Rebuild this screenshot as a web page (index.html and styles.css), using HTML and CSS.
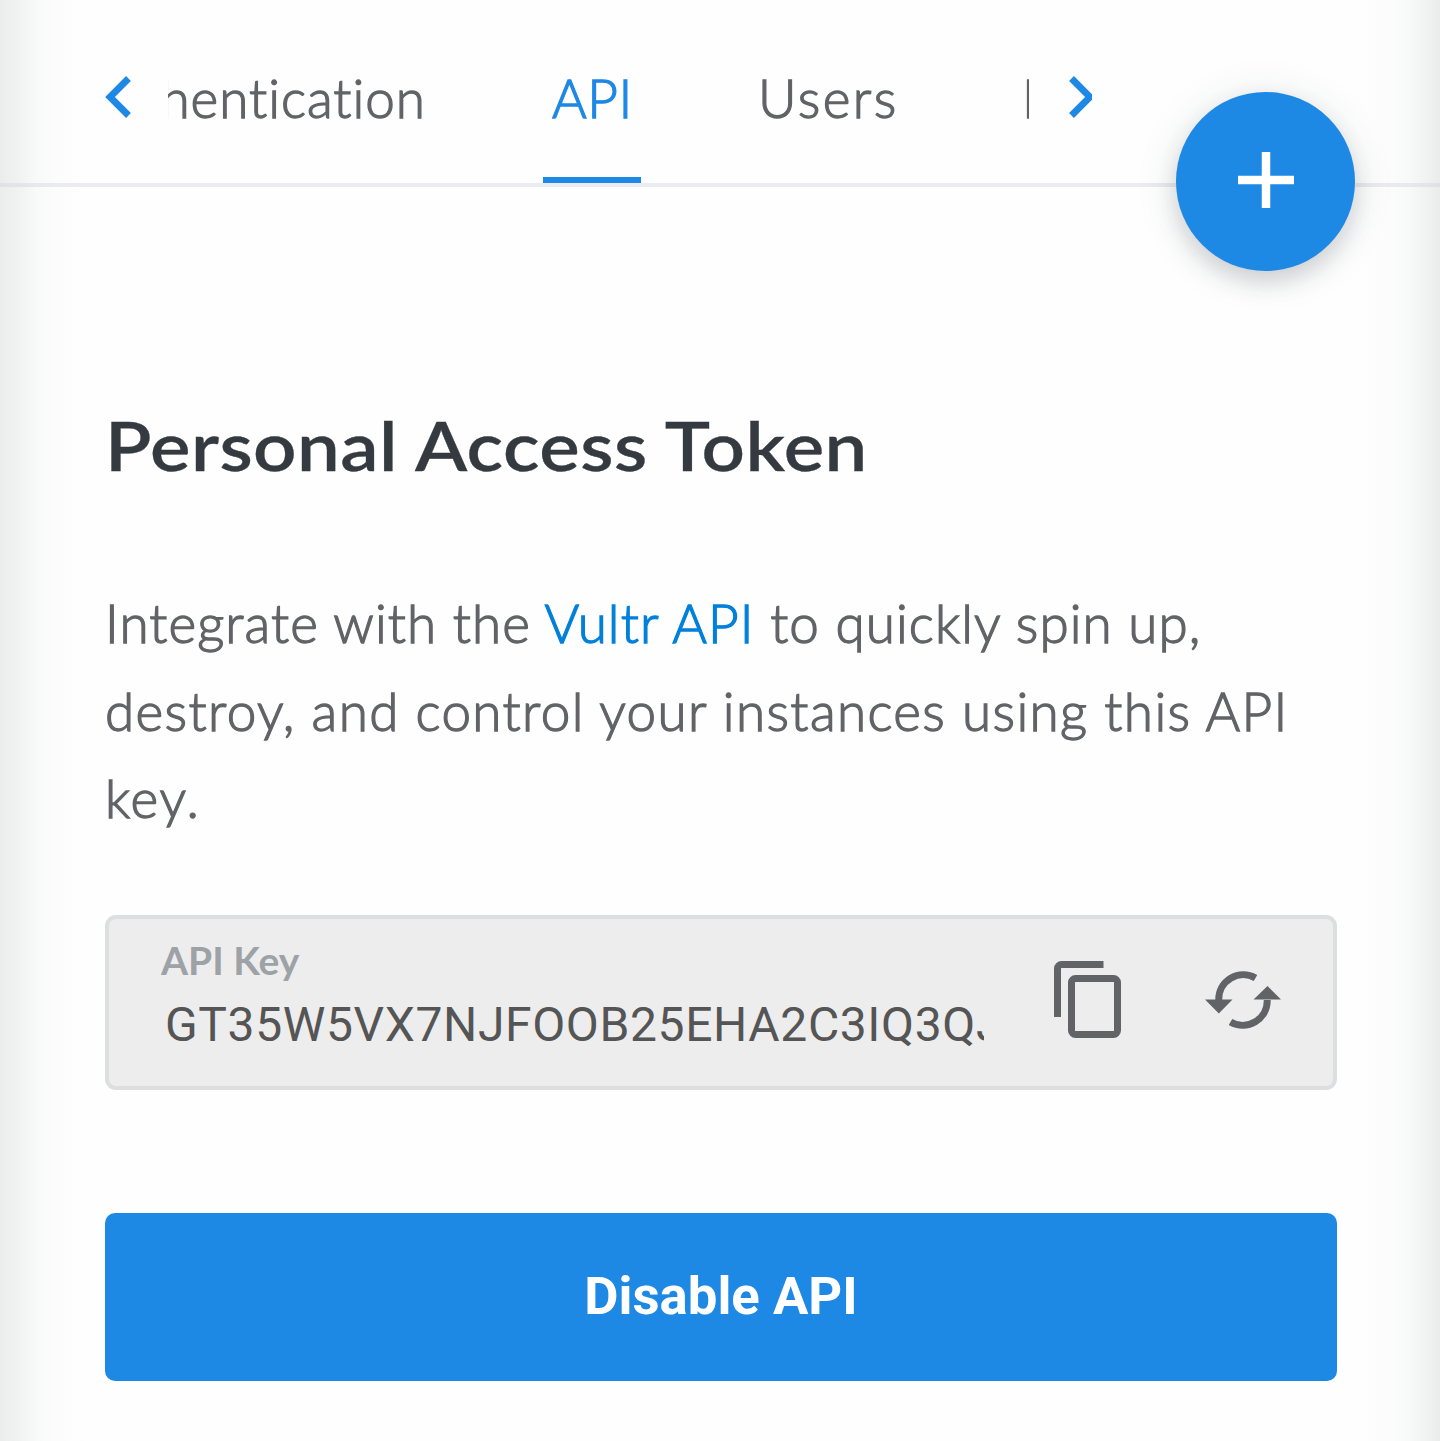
FILE: index.html
```html
<!DOCTYPE html>
<html lang="en">
<head>
<meta charset="utf-8">
<title>API</title>
<link rel="stylesheet" href="styles.css">
</head>
<body>
<header class="topbar">
  <button class="arrow" aria-label="Previous"><svg class="chev" width="28" height="44" viewBox="0 0 28 44"><path d="M23.5 3.5 5 22l18.500 18.500" /></svg></button>
  <nav class="tabs">
    <a class="tab tab-auth"><span>Authentication</span></a>
    <a class="tab tab-api active"><span>API</span></a>
    <a class="tab tab-users"><span>Users</span></a>
    <a class="tab tab-next"><span>Notifications</span></a>
  </nav>
  <button class="arrow next" aria-label="Next"><svg class="chev" width="24" height="44" viewBox="0 0 24 44"><path d="M3.500 3.500 22 22 3.500 40.500" /></svg></button>
  <button class="fab" aria-label="Add"><svg width="56" height="56" viewBox="0 0 56 56"><path d="M28 0v56M0 28h56" /></svg></button>
</header>
<main class="content">
  <h1><span>Personal Access Token</span></h1>
  <p class="intro">
    <span class="line l1">Integrate with the <a>Vultr API</a> to quickly spin up,</span>
    <span class="line l2">destroy, and control your instances using this API</span>
    <span class="line l3">key.</span>
  </p>
  <section class="field">
    <div class="field-text">
      <label>API Key</label>
      <div class="key">GT35W5VX7NJFOOB25EHA2C3IQ3QJ</div>
    </div>
    <svg class="copy" width="67" height="77" viewBox="0 0 67 77"><path d="M3.500 56V7.500a4 4 0 0 1 4-4H49.500"/><rect x="17.500" y="17.500" width="46" height="56" rx="4"/></svg>
    <svg class="refresh" width="76" height="58" viewBox="0 0 76 58"><path class="arc" d="M50.500 7A24.500 24.500 0 0 0 13.800 29M25.500 51A24.500 24.500 0 0 0 62.200 29"/><path class="head" d="M0 28.500h27.500L13.800 42.500zM48.500 28.500H76L62.500 15z"/></svg>
  </section>
  <button class="disable">Disable API</button>
</main>
</body>
</html>
```
FILE: styles.css
```css
* { box-sizing: border-box; }
body {
  margin: 0;
  height: 1441px;
  overflow: hidden;
  color: #616366;
  font-family: Lato, sans-serif;
  font-weight: 300;
  font-variant-ligatures: none;
  background:
    linear-gradient(to right, #ebeded 0, #f1f3f2 20px, #f8f9f9 36px, #fcfcfc 54px, transparent 86px),
    linear-gradient(to left, #ebebeb 0, #f1f2f2 14px, #f8f9f9 32px, #fcfcfc 50px, transparent 84px),
    #fefefe;
}
button { border: 0; padding: 0; background: none; font: inherit; }
svg { display: block; }
.topbar {
  position: relative;
  display: flex;
  height: 187px;
  padding-left: 105px;
  border-bottom: 4px solid rgba(200, 208, 217, .38);
}
.arrow { width: 63px; height: 183px; padding-top: 75px; display: flex; }
.chev path { fill: none; stroke: #1e88e5; stroke-width: 6.800; }
.arrow.next { margin-left: 39px; }
.tabs { display: flex; width: 861px; overflow: hidden; font-size: 53px; line-height: 64px; white-space: nowrap; -webkit-text-stroke: 1.300px; }
.tab { flex: none; height: 183px; padding-top: 66px; }
.tab-auth { width: 375px; padding-right: 117px; display: flex; justify-content: flex-end; letter-spacing: 1px; }
.tab-api { width: 98px; padding-left: 9px; letter-spacing: .5px; }
.tab-users { margin-left: 108px; padding-left: 9px; width: 258px; letter-spacing: 2.500px; }
.tab-next { width: 200px; padding-left: 15px; }
.active { color: #1e88e5; border-bottom: 6.500px solid #1e88e5; }
.fab {
  position: absolute;
  left: 1176px;
  top: 92px;
  width: 179px;
  height: 179px;
  border-radius: 50%;
  background: #1e88e5;
  display: flex;
  justify-content: center;
  padding: 59.500px 0 0 0;
  box-shadow: 0 11px 22px rgba(50, 55, 65, .18), 0 4px 44px rgba(50, 60, 60, .11);
}
.fab path { stroke: #fff; stroke-width: 8.500; fill: none; }
.content { padding: 0 103px 0 105px; }
h1 { margin: 216px 0 0; font-size: 68px; line-height: 84px; font-weight: 600; color: #343a40; white-space: nowrap; }
h1 span { display: inline-block; transform: scaleX(1.12); transform-origin: 0 0; letter-spacing: .430px; -webkit-text-stroke: .300px; }
.intro { margin: 92px 0 0; font-size: 53px; line-height: 87.500px; white-space: nowrap; -webkit-text-stroke: 1.300px; }
.line { display: block; }
.l1 { letter-spacing: 1.080px; }
.l2 { letter-spacing: 1.380px; }
.l3 { letter-spacing: 2px; }
.intro a { color: #0080db; }
.field {
  display: flex;
  align-items: flex-start;
  height: 175px;
  margin-top: 73px;
  border: 4px solid #dcdee0;
  border-radius: 11px;
  background: #ededed;
  padding-left: 52px;
}
.field-text { width: 823px; overflow: hidden; height: 160px; padding-top: 18px; }
label { display: block; font-size: 39px; line-height: 46px; font-weight: 700; color: #9da2a6; }
.key { margin: 12px 0 0 4px; font: 400 48px/60px Roboto, sans-serif; letter-spacing: .620px; color: #555; white-space: nowrap; overflow: hidden; }
.field path, .field rect { fill: none; stroke: #616366; stroke-width: 7; }
.field .head { fill: #616366; stroke: none; }
.copy { margin: 42px 0 0 70px; }
.refresh { margin: 52px 0 0 84px; }
.disable {
  width: 100%;
  height: 168px;
  margin-top: 123px;
  padding-bottom: 2px;
  border-radius: 10px;
  background: #1e88e5;
  color: #fff;
  font: 700 52.700px/62px Roboto, sans-serif;
}
```
